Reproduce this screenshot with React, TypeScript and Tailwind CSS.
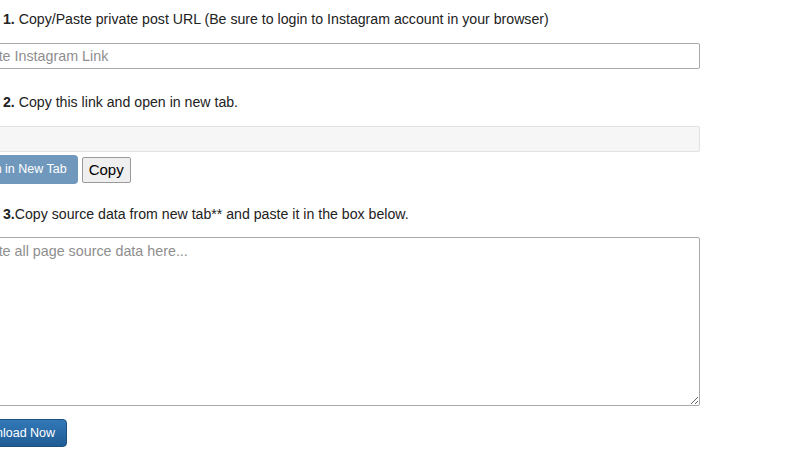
import React from 'react';

const font = { fontFamily: '"Liberation Sans", Arial, sans-serif' };

export default function App() {
  return (
    <div className="w-[800px] h-[450px] overflow-hidden bg-white text-[#222]" style={font}>
      <div className="pt-[11px] flex flex-col">
        <p className="pl-[3px] text-[14.15px] leading-[17px]">
          <b>1.</b> Copy/Paste private post URL (Be sure to login to Instagram account in your browser)
        </p>
        <input
          type="text"
          placeholder="Paste Instagram Link"
          className="mt-[15px] ml-[-39px] w-[739px] h-[26px] px-[12px] text-[14.3px] border border-[#aaaaaa] rounded-[2px] placeholder:text-[#8e8e8e] outline-none"
        />

        <p className="mt-[25px] pl-[3px] text-[14.15px] leading-[17px]">
          <b>2.</b> Copy this link and open in new tab.
        </p>
        <input
          type="text"
          readOnly
          className="mt-[15px] ml-[-39px] w-[739px] h-[26px] px-[12px] text-[14px] bg-[#f6f6f6] border border-[#e2e2e2] rounded-[2px] outline-none"
        />
        <div className="mt-[3px] ml-[-41px] flex items-start gap-[4px]">
          <button className="h-[29px] pl-[12px] pr-[11px] rounded-[4px] bg-[#7098bd] text-white text-[12.5px]">
            Open in New Tab
          </button>
          <button className="mt-[2px] h-[26px] px-[6px] rounded-[2px] bg-[#efefef] border border-[#9a9a9a] text-black text-[15px]">
            Copy
          </button>
        </div>

        <p className="mt-[22px] pl-[3px] text-[14.15px] leading-[17px]">
          <b>3.</b>Copy source data from new tab** and paste it in the box below.
        </p>
        <textarea
          placeholder="Paste all page source data here..."
          className="mt-[14px] ml-[-39px] w-[739px] h-[169px] px-[12px] py-[3px] text-[14.3px] border border-[#aaaaaa] rounded-[2px] placeholder:text-[#8e8e8e] outline-none"
        />
        <div className="mt-[13px] ml-[-42px]">
          <button className="h-[28px] pl-[12px] pr-[11px] rounded-[4px] border border-[#1d4f80] bg-gradient-to-b from-[#3279b8] to-[#1f5c95] text-white text-[12.5px]">
            Download Now
          </button>
        </div>
      </div>
    </div>
  );
}
